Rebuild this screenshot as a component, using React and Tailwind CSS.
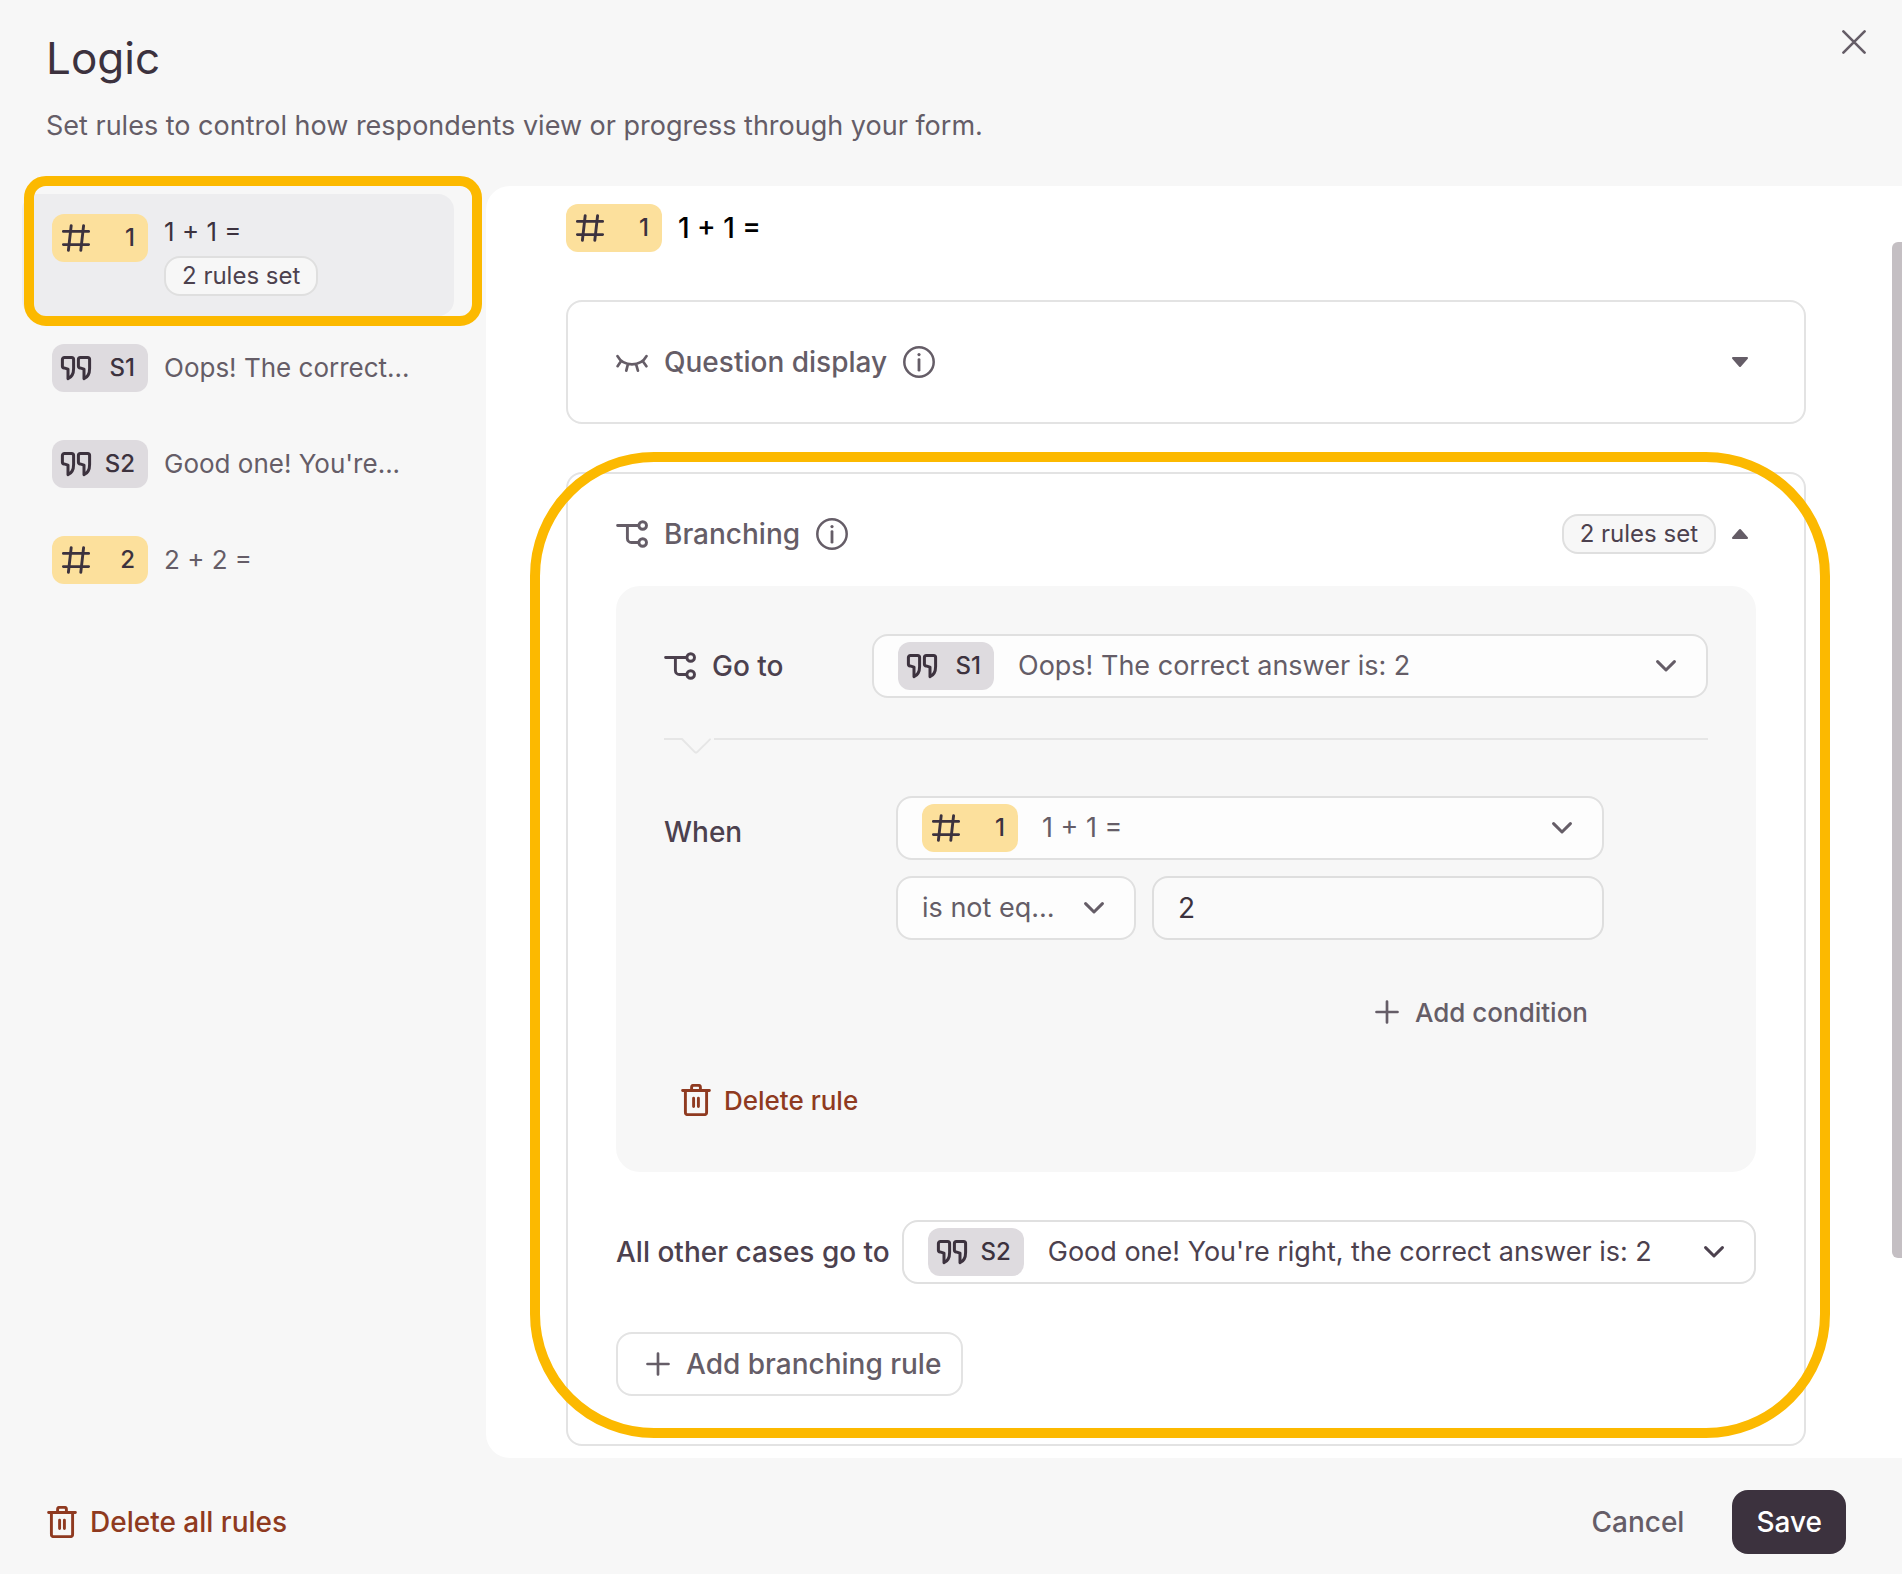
import { useState } from 'react'

const HashIcon = () => (
  <svg className="size-8 shrink-0" viewBox="0 0 32 32" fill="none" stroke="currentColor" strokeWidth="2.9" strokeLinecap="round" aria-hidden="true">
    <path d="M3.4 9.4h25.2M3.4 22.6h25.2M11.2 3.6 8.4 28.4M23.6 3.6 20.8 28.4" />
  </svg>
)

const QuoteIcon = () => (
  <svg className="size-8 shrink-0" viewBox="0 0 32 32" fill="none" stroke="currentColor" strokeWidth="3" strokeLinejoin="round" aria-hidden="true">
    <path d="M4.4 5.4h7.2a2 2 0 0 1 2 2v9c0 5-1.8 8.6-5.6 10.3v-9.6l-4-1.2a1.6 1.6 0 0 1-1.6-1.6V7.4a2 2 0 0 1 2-2z" />
    <path d="M20.4 5.4h7.2a2 2 0 0 1 2 2v9c0 5-1.8 8.6-5.6 10.3v-9.6l-4-1.2a1.6 1.6 0 0 1-1.6-1.6V7.4a2 2 0 0 1 2-2z" />
  </svg>
)

const BranchIcon = () => (
  <svg className="size-8 shrink-0" viewBox="0 0 32 32" fill="none" stroke="currentColor" strokeWidth="2.9" strokeLinecap="round" aria-hidden="true">
    <path d="M1.6 7.5H22M11.4 7.5v13a4 4 0 0 0 4 4H22" />
    <circle cx="26.7" cy="7.5" r="3.8" />
    <circle cx="26.7" cy="24.5" r="3.8" />
  </svg>
)

const EyeClosedIcon = () => (
  <svg className="size-8 shrink-0" viewBox="0 0 32 32" fill="none" stroke="currentColor" strokeWidth="2.7" strokeLinecap="round" aria-hidden="true">
    <path d="M1.5 10.2Q6 18.4 16 18.4T30.5 10.2M4.6 15.8 1.6 20.2M11.6 19.4l-1.3 5.2M20.4 19.4l1.5 5.2M27.2 15.8l3.2 4.4" />
  </svg>
)

const InfoIcon = () => (
  <svg className="size-8 shrink-0" viewBox="0 0 32 32" fill="none" stroke="currentColor" strokeWidth="2.5" strokeLinecap="round" aria-hidden="true">
    <circle cx="16" cy="16" r="14.7" />
    <path d="M16 13.6v10.6" strokeWidth="2.8" />
    <circle cx="16" cy="8.6" r="1.6" fill="currentColor" stroke="none" />
  </svg>
)

const TrashIcon = () => (
  <svg className="size-8 shrink-0" viewBox="0 0 32 32" fill="none" stroke="currentColor" strokeWidth="2.9" strokeLinecap="round" aria-hidden="true">
    <path d="M2.6 6.5h26.8M11.6 6V3.4a2 2 0 0 1 2-2h4.8a2 2 0 0 1 2 2V6M5.4 7v21.6a2 2 0 0 0 2 2h17.2a2 2 0 0 0 2-2V7M13.6 14.2v8.4M18.4 14.2v8.4" />
  </svg>
)

const PlusIcon = () => (
  <svg className="size-6 shrink-0" viewBox="0 0 24 24" fill="none" stroke="currentColor" strokeWidth="2.7" strokeLinecap="round" aria-hidden="true">
    <path d="M12 1.5v21M1.5 12h21" />
  </svg>
)

const ChevronIcon = () => (
  <svg className="pointer-events-none absolute right-[30px] h-3 w-5" viewBox="0 0 20 12" fill="none" stroke="currentColor" strokeWidth="3" strokeLinecap="round" strokeLinejoin="round" aria-hidden="true">
    <path d="M1.6 1.6 10 10l8.4-8.4" />
  </svg>
)

const CaretIcon = ({ up }) => (
  <svg className="size-8 shrink-0" viewBox="0 0 32 32" fill="currentColor" stroke="currentColor" strokeWidth="2" strokeLinejoin="round" aria-hidden="true">
    <path d={up ? 'M9 20h14l-7-8z' : 'M9 12h14l-7 8z'} />
  </svg>
)

const Badge = ({ kind, label }) => (
  <span
    className={`flex h-12 w-24 shrink-0 items-center justify-between rounded-xl pl-2 pr-[13px] text-2xl font-medium text-[#3c323e] ${
      kind === 'number' ? 'bg-[#fce09c]' : 'bg-[#dedbdf]'
    }`}
  >
    {kind === 'number' ? <HashIcon /> : <QuoteIcon />}
    {label}
  </span>
)

const RulesPill = () => (
  <span className="flex h-10 w-fit items-center rounded-2xl border-2 border-[#dfdfdf] bg-[#f7f7f7] px-4 text-2xl text-[#4c414e]">
    2 rules set
  </span>
)

const SelectField = ({ id, label, badge, value, className = '', tone = 'bg-[#fdfdfd] text-[#655d67]' }) => (
  <div className={`relative flex h-16 min-w-0 items-center gap-6 rounded-2xl border-2 border-[#e0e0e0] pl-6 ${tone} ${className}`}>
    {badge}
    <select
      id={id}
      aria-label={label}
      className="h-full min-w-0 flex-1 appearance-none overflow-hidden bg-transparent pr-[70px] text-[27px] text-ellipsis whitespace-nowrap outline-none"
    >
      <option>{value}</option>
    </select>
    <ChevronIcon />
  </div>
)

const CardHeader = ({ icon, title, open, children }) => (
  <div className="flex h-10 items-center gap-4 text-[#655d67]">
    {icon}
    <h3 className="text-[28px] font-medium">{title}</h3>
    <button type="button" aria-label={`About ${title}`}>
      <InfoIcon />
    </button>
    <div className="ml-auto flex items-center gap-2">
      {children}
      <button type="button" aria-label={`Toggle ${title}`} aria-expanded={open}>
        <CaretIcon up={open} />
      </button>
    </div>
  </div>
)

const questions = [
  { kind: 'number', label: '1', text: '1 + 1 =', active: true },
  { kind: 'statement', label: 'S1', text: 'Oops! The correct...' },
  { kind: 'statement', label: 'S2', text: "Good one! You're..." },
  { kind: 'number', label: '2', text: '2 + 2 =' },
]

const App = () => {
  const [value, setValue] = useState('2')

  return (
    <div className="flex min-h-screen flex-col bg-[#f7f7f7] font-['Inter','Liberation_Sans',sans-serif] text-[#3c323e]">
      <header className="flex items-start justify-between pt-[30px] pr-7 pb-[42px] pl-[46px]">
        <div>
          <h1 className="text-[44px] leading-[56px]">Logic</h1>
          <p className="mt-[22px] text-[27px] leading-9 text-[#655d67]">
            Set rules to control how respondents view or progress through your form.
          </p>
        </div>
        <button type="button" aria-label="Close" className="-mt-2 flex size-10 items-center justify-center text-[#655d67]">
          <svg className="size-6" viewBox="0 0 24 24" fill="none" stroke="currentColor" strokeWidth="2.6" strokeLinecap="round">
            <path d="M1.4 1.4l21.2 21.2M22.6 1.4 1.4 22.6" />
          </svg>
        </button>
      </header>

      <div className="flex flex-1">
        {/* Question list */}
        <nav className="w-[486px] shrink-0 pt-2 pr-8 pl-[22px]">
          <ul className="flex flex-col gap-2">
            {questions.map((q) => (
              <li key={q.label} className="relative">
                <button
                  type="button"
                  className={`flex w-full items-start gap-4 rounded-2xl px-[30px] py-5 text-left ${q.active ? 'bg-[#ededef]' : ''}`}
                >
                  <Badge kind={q.kind} label={q.label} />
                  {q.active ? (
                    <span className="flex flex-col gap-[6px] text-[26px] leading-9">
                      {q.text}
                      <RulesPill />
                    </span>
                  ) : (
                    <span className="self-center text-[26px] leading-9 text-[#655d67]">{q.text}</span>
                  )}
                </button>
                {q.active && (
                  <div className="pointer-events-none absolute -top-[18px] -right-7 -bottom-[10px] left-[2px] rounded-[22px] border-10 border-[#fcb900]" />
                )}
              </li>
            ))}
          </ul>
        </nav>

        {/* Rules for the selected question */}
        <main className="relative min-w-0 flex-1 rounded-l-3xl bg-white pt-[18px] pr-24 pb-3 pl-20">
          <div className="flex items-center gap-4">
            <Badge kind="number" label="1" />
            <h2 className="text-[28px] font-medium text-black">1 + 1 =</h2>
          </div>

          <section className="mt-12 rounded-2xl border-2 border-[#e3e3e3] px-12 py-10">
            <CardHeader icon={<EyeClosedIcon />} title="Question display" open={false} />
          </section>

          <section className="relative mt-12 rounded-2xl border-2 border-[#e3e3e3] px-12 pt-10 pb-12">
            <CardHeader icon={<BranchIcon />} title="Branching" open>
              <RulesPill />
            </CardHeader>

            <div className="mt-8 rounded-3xl bg-[#f7f7f7] p-12">
              <div className="flex items-center">
                <label htmlFor="goto" className="flex w-[208px] shrink-0 items-center gap-4 text-[28px] font-medium text-[#4c414e]">
                  <BranchIcon />
                  Go to
                </label>
                <SelectField
                  id="goto"
                  className="flex-1"
                  badge={<Badge kind="statement" label="S1" />}
                  value="Oops! The correct answer is: 2"
                />
              </div>

              <div className="mt-10 flex h-4 items-start">
                <div className="h-[2px] w-4 bg-[#e6e6e6]" />
                <svg className="h-4 w-[34px]" viewBox="0 0 34 16" fill="none" stroke="#e6e6e6" strokeWidth="2" strokeLinecap="round" aria-hidden="true">
                  <path d="M0 1h2L14.6 13.9a2 2 0 0 0 2.8 0L30 1.4" />
                </svg>
                <div className="h-[2px] flex-1 bg-[#e6e6e6]" />
              </div>

              <div className="mt-[42px] flex items-start">
                <label htmlFor="when" className="w-[232px] shrink-0 text-[28px] leading-[72px] font-medium text-[#4c414e]">
                  When
                </label>
                <div className="mr-[104px] flex min-w-0 flex-1 flex-col gap-4">
                  <SelectField id="when" badge={<Badge kind="number" label="1" />} value="1 + 1 =" />
                  <div className="flex gap-4">
                    <SelectField label="Operator" className="w-60" value="is not equal to" />
                    <input
                      aria-label="Value"
                      value={value}
                      onChange={(e) => setValue(e.target.value)}
                      className="h-16 min-w-0 flex-1 rounded-2xl border-2 border-[#dedede] bg-[#fafafa] px-6 text-[28px] outline-none"
                    />
                  </div>
                  <button type="button" className="mt-6 flex h-16 items-center gap-4 self-end px-4 text-[26px] font-medium text-[#655d67]">
                    <PlusIcon />
                    Add condition
                  </button>
                </div>
              </div>

              <button type="button" className="mt-8 flex h-12 items-center gap-3 px-4 text-[26px] font-medium text-[#8f3a20]">
                <TrashIcon />
                Delete rule
              </button>
            </div>

            <div className="mt-12 flex items-center gap-3">
              <label htmlFor="fallback" className="shrink-0 text-[28px] font-medium text-[#4c414e]">
                All other cases go to
              </label>
              <SelectField
                id="fallback"
                className="flex-1"
                tone="bg-white text-[#4c414e]"
                badge={<Badge kind="statement" label="S2" />}
                value="Good one! You're right, the correct answer is: 2"
              />
            </div>

            <button
              type="button"
              className="mt-12 flex h-16 items-center gap-4 rounded-2xl border-2 border-[#e3e3e3] pr-5 pl-7 text-[28px] font-medium text-[#655d67]"
            >
              <PlusIcon />
              Add branching rule
            </button>

            <div className="pointer-events-none absolute -top-[22px] -right-[26px] bottom-[6px] -left-[38px] rounded-[124px] border-10 border-[#fcb900]" />
          </section>

          <div className="absolute top-14 right-0 bottom-[200px] w-[10px] rounded-l-md bg-[#c4bfc3]" />
        </main>
      </div>

      <footer className="flex items-center justify-between pt-8 pr-14 pb-5 pl-[46px] text-[28px] font-medium">
        <button type="button" className="flex items-center gap-3 text-[#8f3a20]">
          <TrashIcon />
          Delete all rules
        </button>
        <div className="flex items-center gap-12">
          <button type="button" className="text-[#655d67]">Cancel</button>
          <button type="button" className="h-16 rounded-2xl bg-[#3c323e] px-6 text-white">Save</button>
        </div>
      </footer>
    </div>
  )
}

export default App
